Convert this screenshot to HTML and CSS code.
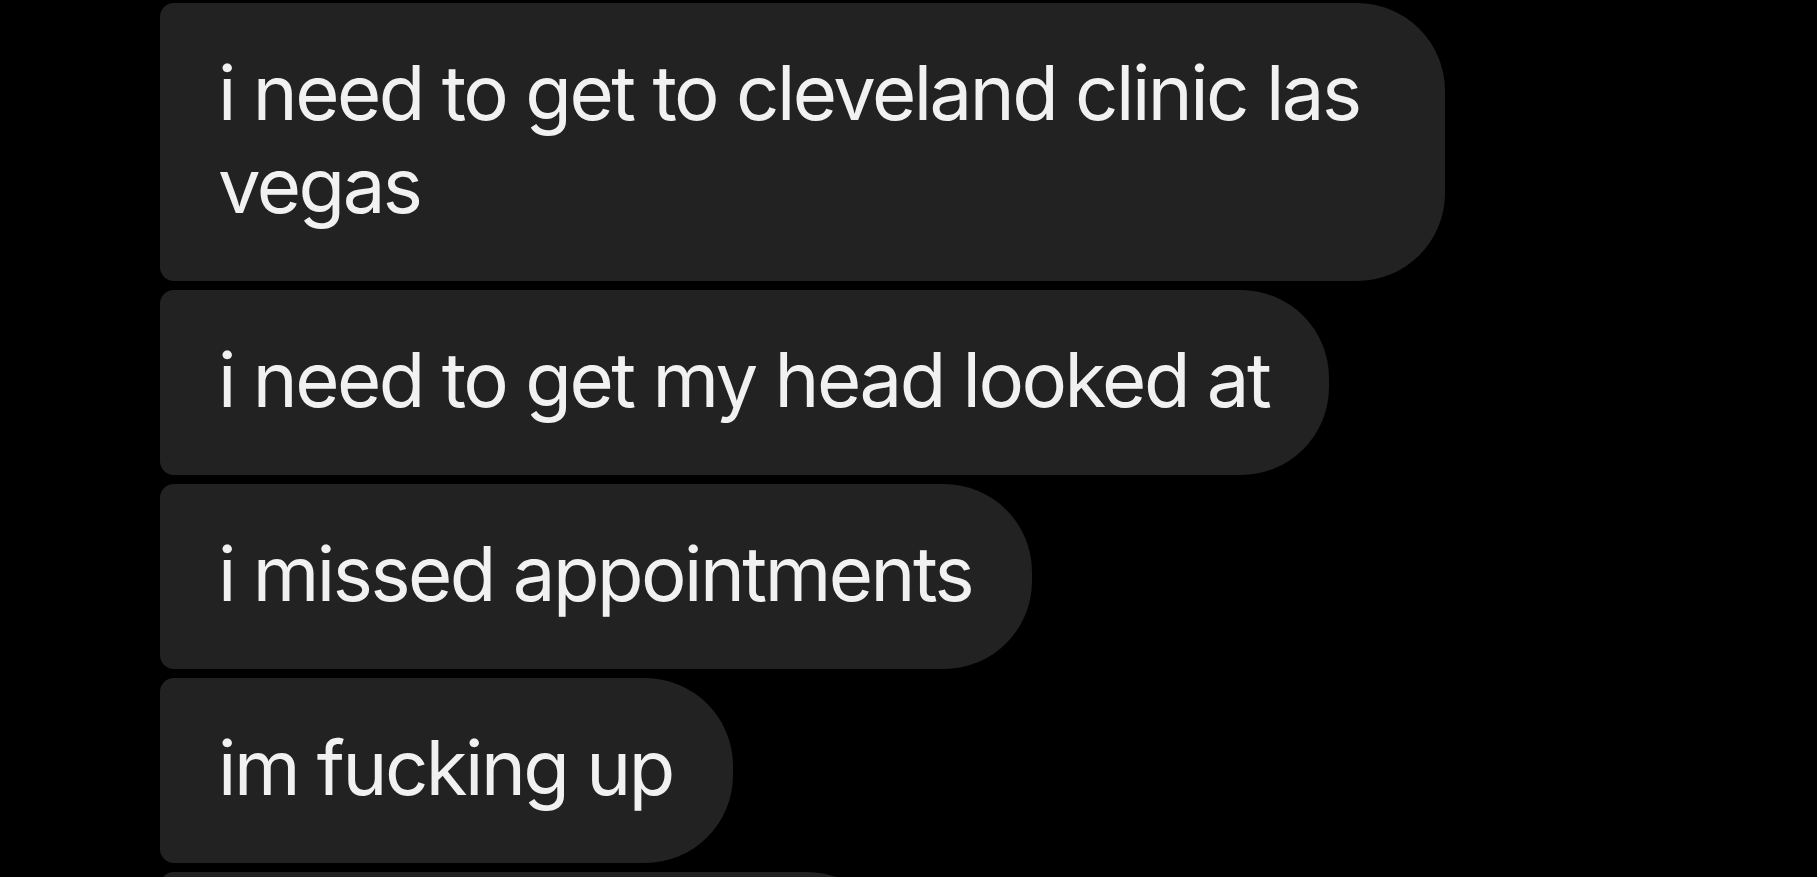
FILE: index.html
```html
<!DOCTYPE html>
<html lang="en">
<head>
<meta charset="utf-8">
<title>Messages</title>
<link rel="stylesheet" href="styles.css">
</head>
<body>
<main class="thread">
  <div class="bubble">i need to get to cleveland clinic las vegas</div>
  <div class="bubble">i need to get my head looked at</div>
  <div class="bubble">i missed appointments</div>
  <div class="bubble">im fucking up</div>
  <div class="bubble bubble-cut"></div>
</main>
</body>
</html>
```
FILE: styles.css
```css
html, body {
  margin: 0;
  padding: 0;
  background: #000;
  height: 100%;
  overflow: hidden;
}

.thread {
  display: flex;
  flex-direction: column;
  align-items: flex-start;
  gap: 9px;
  padding: 3px 0 0 160px;
}

.bubble {
  box-sizing: border-box;
  max-width: 1285px;
  background: #222222;
  color: #f1f1f1;
  font-family: Inter, "Helvetica Neue", "Liberation Sans", sans-serif;
  font-size: 76px;
  line-height: 93px;
  letter-spacing: -2.5px;
  padding: 43px 60px 49px 58px;
  border-radius: 14px 88px 88px 14px;
}

.bubble-cut {
  width: 735px;
  height: 185px;
}
```
